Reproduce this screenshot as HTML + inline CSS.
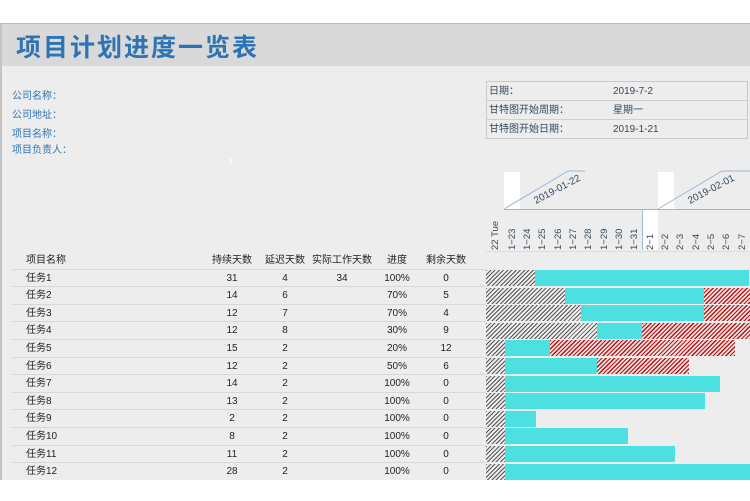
<!DOCTYPE html>
<html><head><meta charset="utf-8"><style>
*{margin:0;padding:0;box-sizing:border-box}
body{width:750px;height:501px;background:#fff;position:relative;overflow:hidden;font-family:"Liberation Sans","Noto Sans CJK SC",sans-serif;font-size:10px;color:#222}
.a{position:absolute}
#main{left:0;top:23px;width:750px;height:457px;background:#ededed;border-top:1px solid #bcbcbc;border-left:2px solid #c4c4c4}
#hd{left:2px;top:24px;width:748px;height:42px;background:#d9d9d9}
#title{left:16px;top:28px;font-size:25px;font-weight:bold;color:#2e74b5;letter-spacing:2px}
.lbl{color:#2e74b5;font-size:10px;left:12px}
#info{left:486px;top:81px;width:262px;height:58px;border:1px solid #c8c8c8}
.ir{position:absolute;left:0;width:260px;height:19px;border-bottom:1px solid #cfcfcf;line-height:19px;color:#34495e}
.ir span{position:absolute;left:2px}.ir b{position:absolute;left:126px;font-weight:normal}
.row{position:absolute;left:12px;width:474px;height:17.6px;border-bottom:1px solid #d8d8d8;line-height:17px;font-size:10px}
.row span{position:absolute;transform:translateX(-50%)}
.row .n{left:14px;transform:none}
.g{position:absolute;height:16px}
.h{background:repeating-linear-gradient(135deg,#555 0 1px,#ededed 1px 3px)}
.c{background:#4de0e0}
.r{background:repeating-linear-gradient(135deg,#b01818 0 1.2px,#f3dede 1.2px 3px)}
.dl{position:absolute;top:250px;transform-origin:0 0;transform:rotate(-90deg);font-size:9.5px;color:#34495e;white-space:nowrap}
</style></head><body>
<div class="a" id="main"></div>
<div class="a" id="hd"></div>
<div class="a" id="title">项目计划进度一览表</div>
<div class="a lbl" style="top:87px">公司名称：</div>
<div class="a lbl" style="top:106px">公司地址：</div>
<div class="a lbl" style="top:125px">项目名称：</div>
<div class="a lbl" style="top:141px">项目负责人：</div>
<div class="a" style="left:229px;top:157px;font-size:8px;color:#fff">1</div>
<div class="a" id="info">
<div class="ir" style="top:0"><span>日期：</span><b>2019-7-2</b></div>
<div class="ir" style="top:19px"><span>甘特图开始周期：</span><b>星期一</b></div>
<div class="ir" style="top:38px;border-bottom:none"><span>甘特图开始日期：</span><b>2019-1-21</b></div>
</div>
<div class="a" style="left:504px;top:172px;width:16px;height:37px;background:#fff"></div>
<div class="a" style="left:658px;top:172px;width:16px;height:37px;background:#fff"></div>
<div class="a" style="left:643px;top:209px;width:15px;height:41px;background:#fff"></div>
<svg class="a" style="left:480px;top:160px" width="270" height="100">
<g stroke="#9ab8d8" stroke-width="1" fill="none">
<path d="M24 49 L88 11 L105 11"/><path d="M178 49 L242 11 L270 11"/>
<path d="M24 49.5 H270"/><path d="M162.5 49 V90"/>
</g>
<text x="56" y="44" transform="rotate(-28 56 44)" font-size="10" fill="#34495e" font-family="Liberation Sans">2019-01-22</text>
<text x="210" y="44" transform="rotate(-28 210 44)" font-size="10" fill="#34495e" font-family="Liberation Sans">2019-02-01</text>
</svg>
<div class="dl" style="left:490px">22 Tue</div>
<div class="dl" style="left:507px">1−23</div>
<div class="dl" style="left:522px">1−24</div>
<div class="dl" style="left:537px">1−25</div>
<div class="dl" style="left:553px">1−26</div>
<div class="dl" style="left:568px">1−27</div>
<div class="dl" style="left:583px">1−28</div>
<div class="dl" style="left:599px">1−29</div>
<div class="dl" style="left:614px">1−30</div>
<div class="dl" style="left:629px">1−31</div>
<div class="dl" style="left:645px">2−1</div>
<div class="dl" style="left:660px">2−2</div>
<div class="dl" style="left:675px">2−3</div>
<div class="dl" style="left:691px">2−4</div>
<div class="dl" style="left:706px">2−5</div>
<div class="dl" style="left:721px">2−6</div>
<div class="dl" style="left:737px">2−7</div>
<div class="a" style="left:486px;top:251px;width:264px;height:1px;background:#dcdcdc"></div>
<div class="row" style="top:252px"><span class="n">项目名称</span><span style="left:220px">持续天数</span><span style="left:273px">延迟天数</span><span style="left:330px">实际工作天数</span><span style="left:385px">进度</span><span style="left:434px">剩余天数</span></div>
<div class="row" style="top:269.6px"><span class="n">任务1</span><span style="left:220px">31</span><span style="left:273px">4</span><span style="left:330px">34</span><span style="left:385px">100%</span><span style="left:434px">0</span></div>
<div class="row" style="top:287.2px"><span class="n">任务2</span><span style="left:220px">14</span><span style="left:273px">6</span><span style="left:385px">70%</span><span style="left:434px">5</span></div>
<div class="row" style="top:304.8px"><span class="n">任务3</span><span style="left:220px">12</span><span style="left:273px">7</span><span style="left:385px">70%</span><span style="left:434px">4</span></div>
<div class="row" style="top:322.4px"><span class="n">任务4</span><span style="left:220px">12</span><span style="left:273px">8</span><span style="left:385px">30%</span><span style="left:434px">9</span></div>
<div class="row" style="top:340px"><span class="n">任务5</span><span style="left:220px">15</span><span style="left:273px">2</span><span style="left:385px">20%</span><span style="left:434px">12</span></div>
<div class="row" style="top:357.6px"><span class="n">任务6</span><span style="left:220px">12</span><span style="left:273px">2</span><span style="left:385px">50%</span><span style="left:434px">6</span></div>
<div class="row" style="top:375.2px"><span class="n">任务7</span><span style="left:220px">14</span><span style="left:273px">2</span><span style="left:385px">100%</span><span style="left:434px">0</span></div>
<div class="row" style="top:392.8px"><span class="n">任务8</span><span style="left:220px">13</span><span style="left:273px">2</span><span style="left:385px">100%</span><span style="left:434px">0</span></div>
<div class="row" style="top:410.4px"><span class="n">任务9</span><span style="left:220px">2</span><span style="left:273px">2</span><span style="left:385px">100%</span><span style="left:434px">0</span></div>
<div class="row" style="top:428px"><span class="n">任务10</span><span style="left:220px">8</span><span style="left:273px">2</span><span style="left:385px">100%</span><span style="left:434px">0</span></div>
<div class="row" style="top:445.6px"><span class="n">任务11</span><span style="left:220px">11</span><span style="left:273px">2</span><span style="left:385px">100%</span><span style="left:434px">0</span></div>
<div class="row" style="top:463.2px;border-bottom:none"><span class="n">任务12</span><span style="left:220px">28</span><span style="left:273px">2</span><span style="left:385px">100%</span><span style="left:434px">0</span></div>
<div class="g h" style="top:270px;left:486px;width:49px"></div><div class="g c" style="top:270px;left:535px;width:214px"></div>
<div class="g h" style="top:287.6px;left:486px;width:79px"></div><div class="g c" style="top:287.6px;left:565px;width:139px"></div><div class="g r" style="top:287.6px;left:704px;width:46px"></div>
<div class="g h" style="top:305.2px;left:486px;width:95px"></div><div class="g c" style="top:305.2px;left:581px;width:123px"></div><div class="g r" style="top:305.2px;left:704px;width:46px"></div>
<div class="g h" style="top:322.8px;left:486px;width:111px"></div><div class="g c" style="top:322.8px;left:597px;width:45px"></div><div class="g r" style="top:322.8px;left:642px;width:108px"></div>
<div class="g h" style="top:340.4px;left:486px;width:19px"></div><div class="g c" style="top:340.4px;left:505px;width:45px"></div><div class="g r" style="top:340.4px;left:550px;width:185px"></div>
<div class="g h" style="top:358px;left:486px;width:19px"></div><div class="g c" style="top:358px;left:505px;width:92px"></div><div class="g r" style="top:358px;left:597px;width:92px"></div>
<div class="g h" style="top:375.6px;left:486px;width:19px"></div><div class="g c" style="top:375.6px;left:505px;width:215px"></div>
<div class="g h" style="top:393.2px;left:486px;width:19px"></div><div class="g c" style="top:393.2px;left:505px;width:200px"></div>
<div class="g h" style="top:410.8px;left:486px;width:19px"></div><div class="g c" style="top:410.8px;left:505px;width:31px"></div>
<div class="g h" style="top:428.4px;left:486px;width:19px"></div><div class="g c" style="top:428.4px;left:505px;width:123px"></div>
<div class="g h" style="top:446px;left:486px;width:19px"></div><div class="g c" style="top:446px;left:505px;width:170px"></div>
<div class="g h" style="top:463.6px;left:486px;width:19px"></div><div class="g c" style="top:463.6px;left:505px;width:245px"></div>
</body></html>
